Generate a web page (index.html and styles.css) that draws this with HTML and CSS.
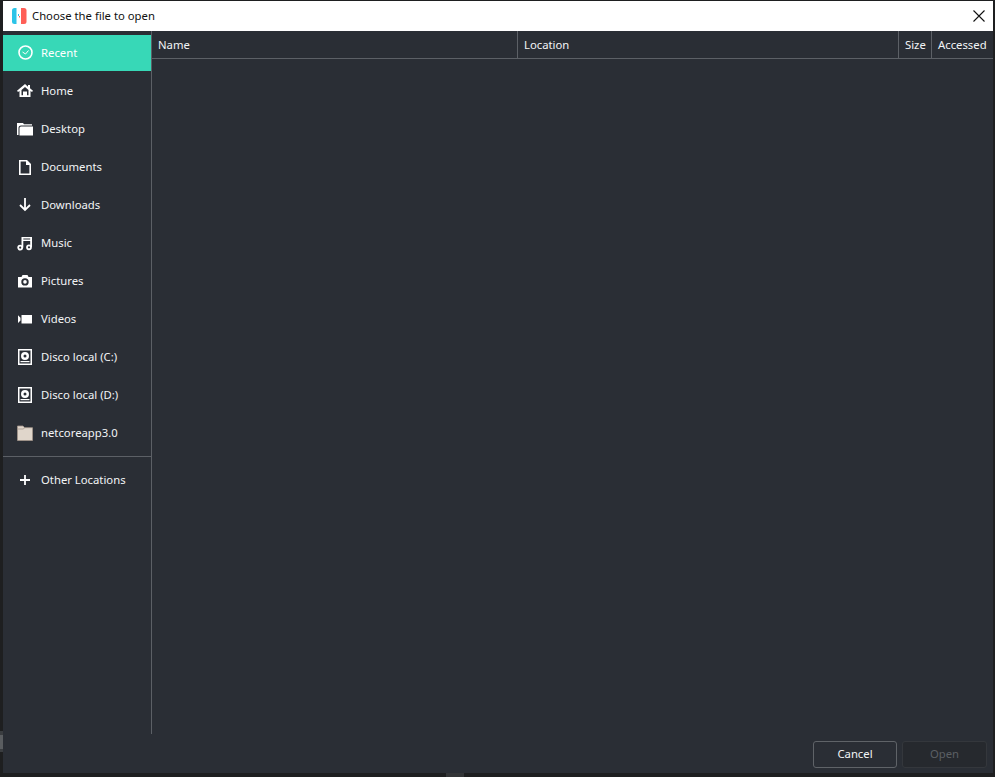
FILE: index.html
```html
<!DOCTYPE html>
<html lang="en">
<head>
<meta charset="utf-8">
<title>Choose the file to open</title>
<link rel="stylesheet" href="styles.css">
</head>
<body>
<div class="window">
  <header class="titlebar">
    <svg class="logo" width="15" height="16" viewBox="0 0 15 16"><path fill="#2cc4e8" d="M4.500 0H2.500Q0 0 0 2.500V13.500Q0 16 2.500 16H4.500Z"/><path fill="#ff5f57" d="M9 0H12Q14.500 0 14.500 2.500V13.500Q14.500 16 12 16H9Z"/><rect x="6" y="6" width="1" height="2" fill="#2cc4e8"/><rect x="7" y="8" width="1" height="1.500" fill="#ff5f57"/></svg>
    <span class="title">Choose the file to open</span>
    <svg class="close" width="12" height="12" viewBox="0 0 12 12"><path d="M0.500 0.500L11.500 11.500M11.500 0.500L0.500 11.500" stroke="#111" stroke-width="1.100" fill="none"/></svg>
  </header>
  <div class="content">
    <nav class="sidebar">
      <a class="place active">
        <svg class="icon" viewBox="0 0 16 16"><circle cx="8.500" cy="7.500" r="6.500" fill="none" stroke="#fff" stroke-width="1.600"/><path d="M5.500 7L8.500 9L11.500 5.500" fill="none" stroke="#fff" stroke-width="1"/></svg>
        <span>Recent</span></a>
      <a class="place">
        <svg class="icon" viewBox="0 0 16 16"><path fill="#fff" fill-rule="evenodd" d="M8 1L0 7.800L1 9L2.500 8V14H13.500V8L15 9L16 7.800L13 5.300V2H11V3.700ZM4.500 7L8 4L11.500 7V12.300H10V8.500H6V12.300H4.500Z"/></svg>
        <span>Home</span></a>
      <a class="place">
        <svg class="icon" viewBox="0 0 16 16"><path fill="#fff" d="M0 2H6L7 3.200H15V4.500H4Q1.500 4.500 1.500 7V14H0Z"/><path fill="#fff" d="M2.500 7Q2.500 5.500 4 5.500H16V14.500H2.500Z"/></svg>
        <span>Desktop</span></a>
      <a class="place">
        <svg class="icon" viewBox="0 0 16 16"><path fill="#fff" fill-rule="evenodd" d="M2 1H10L14 5V16H2ZM3.600 2.600V14.400H12.400V6H9V2.600Z"/></svg>
        <span>Documents</span></a>
      <a class="place">
        <svg class="icon" viewBox="0 0 16 16"><path fill="none" stroke="#fff" stroke-width="1.800" d="M8 1V13M3 8L8 13L13 8"/></svg>
        <span>Downloads</span></a>
      <a class="place">
        <svg class="icon" viewBox="0 0 16 16"><path fill="#fff" fill-rule="evenodd" d="M4.500 2H15V12H13.200V6H6.300V12.500H4.500ZM6.300 3.500V4.600H13.200V3.500Z"/><circle cx="3.200" cy="12.600" r="2" fill="none" stroke="#fff" stroke-width="1.800"/><circle cx="12" cy="12.300" r="2" fill="none" stroke="#fff" stroke-width="1.800"/></svg>
        <span>Music</span></a>
      <a class="place">
        <svg class="icon" viewBox="0 0 16 16"><path fill="#fff" fill-rule="evenodd" d="M1 4H4.500L5.500 2H10.500L11.500 4H15V14.500H1ZM8 5.200A3.700 3.700 0 1 0 8 12.600A3.700 3.700 0 1 0 8 5.200Z"/><circle cx="8" cy="8.900" r="1.800" fill="#fff"/></svg>
        <span>Pictures</span></a>
      <a class="place">
        <svg class="icon" viewBox="0 0 16 16"><path fill="#fff" d="M1 4.200L3.500 6.700V9.500L1 12ZM4.500 4H15V12.500H4.500Z"/></svg>
        <span>Videos</span></a>
      <a class="place">
        <svg class="icon" viewBox="0 0 16 16"><path fill="#fff" fill-rule="evenodd" d="M1 0H15V16H1ZM2.500 1.500V14.500H13.500V1.500Z"/><path fill="#fff" fill-rule="evenodd" d="M8 3A4 4 0 1 0 8 11A4 4 0 1 0 8 3ZM8 5.500A1.500 1.500 0 1 1 8 8.500A1.500 1.500 0 1 1 8 5.500Z"/><rect x="3.500" y="12" width="9" height="1.200" fill="#fff"/></svg>
        <span>Disco local (C:)</span></a>
      <a class="place">
        <svg class="icon" viewBox="0 0 16 16"><path fill="#fff" fill-rule="evenodd" d="M1 0H15V16H1ZM2.500 1.500V14.500H13.500V1.500Z"/><path fill="#fff" fill-rule="evenodd" d="M8 3A4 4 0 1 0 8 11A4 4 0 1 0 8 3ZM8 5.500A1.500 1.500 0 1 1 8 8.500A1.500 1.500 0 1 1 8 5.500Z"/><rect x="3.500" y="12" width="9" height="1.200" fill="#fff"/></svg>
        <span>Disco local (D:)</span></a>
      <a class="place">
        <svg class="icon" viewBox="0 0 16 16"><path fill="#e0d6cb" stroke="#a3968a" stroke-width="0.800" d="M0.500 1H6L7.500 2.700H15.500V15.500H0.500Z"/><path fill="none" stroke="#a3968a" stroke-width="0.800" d="M0.500 4H6.500L7.500 2.700"/></svg>
        <span>netcoreapp3.0</span></a>
      <div class="divider"></div>
      <a class="place other">
        <svg class="icon" viewBox="0 0 16 16"><path fill="none" stroke="#fff" stroke-width="1.800" d="M8 3V13M3 8H13"/></svg>
        <span>Other Locations</span></a>
    </nav>
    <main class="files">
      <div class="columns">
        <div class="col col-name">Name</div>
        <div class="col col-location">Location</div>
        <div class="col col-size">Size</div>
        <div class="col col-accessed">Accessed</div>
      </div>
    </main>
  </div>
  <footer class="actions">
    <button class="btn">Cancel</button>
    <button class="btn disabled" disabled>Open</button>
  </footer>
</div>
<div class="edge-scroll"></div>
<div class="edge-tab"></div>
</body>
</html>
```

FILE: styles.css
```css
* { box-sizing: border-box; }
html, body { height: 100%; }
body {
  margin: 0;
  background: #1e1f20;
  font-family: "Noto Sans", sans-serif;
  font-size: 11.3px;
  overflow: hidden;
  position: relative;
}
.window {
  width: 990px;
  height: 772px;
  margin: 1px 0 0 3px;
  background: #2a2e35;
  display: flex;
  flex-direction: column;
  color: #f2f4f5;
}
.titlebar {
  height: 30px;
  flex: none;
  background: #fff;
  color: #111;
  display: flex;
  align-items: center;
  padding: 0 9px;
}
.logo { margin-right: 5px; flex: none; }
.title { flex: 1; padding-bottom: 1px; }
.close { flex: none; margin-right: -1px; }
.content { height: 703px; flex: none; display: flex; }
.sidebar {
  width: 149px;
  flex: none;
  border-right: 1px solid #5c6066;
  padding-top: 4px;
  display: flex;
  flex-direction: column;
}
.place {
  height: 36px;
  margin-bottom: 2px;
  flex: none;
  display: flex;
  align-items: center;
  padding-left: 14px;
  gap: 8px;
}
.place span { padding-bottom: 2px; }
.place .icon { width: 16px; height: 16px; flex: none; }
.place.active { background: #37d8b7; color: #fff; }
.divider { height: 1px; background: #5c6066; margin-top: 3px; margin-bottom: 5px; flex: none; }
.files { flex: 1; min-width: 0; }
.columns {
  height: 28px;
  display: flex;
  border-bottom: 1px solid #5c6066;
}
.col {
  padding: 0 6px;
  line-height: 27px;
  border-right: 1px solid #5c6066;
  flex: none;
}
.col-name { width: 366px; }
.col-location { width: 381px; }
.col-size { width: 33px; }
.col-accessed { flex: 1; border-right: none; }
.actions {
  flex: 1;
  display: flex;
  justify-content: flex-end;
  align-items: flex-start;
  gap: 5px;
  padding: 7px 6px 0 0;
}
.btn {
  font: inherit;
  color: #f2f4f5;
  background: #2a2e35;
  border: 1px solid #5f6368;
  border-radius: 3px;
  height: 27px;
  width: 84px;
  padding: 0 0 2px;
}
.btn.disabled {
  width: 85px;
  color: #5b5f64;
  background: #26292e;
  border-color: #34373c;
}
.edge-scroll {
  position: absolute;
  left: 0;
  top: 731px;
  width: 3px;
  height: 21px;
  background: #5a5d60;
  border-top: 4px solid #3a3d40;
  border-bottom: 3px solid #3a3d40;
}
.edge-tab {
  position: absolute;
  left: 446px;
  top: 773px;
  width: 18px;
  height: 4px;
  background: #333537;
}
```
